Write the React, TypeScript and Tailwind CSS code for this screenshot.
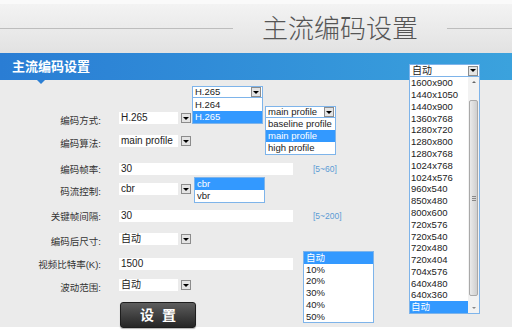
const font = "font-['Liberation_Sans','Noto_Sans_CJK_SC',sans-serif]";

function Arrow() {
    return (
        <span className="flex h-[10px] w-[10px] shrink-0 items-center justify-center border border-[#8c8c8c] bg-[#e4e4e4]">
            <span className="border-x-[3px] border-t-[3px] border-x-transparent border-t-black" />
        </span>
    );
}

function Select({ value }: { value: string }) {
    return (
        <div className="flex h-[12px] w-[72px] items-center">
            <div className="flex h-full w-[59px] items-center whitespace-nowrap bg-white pl-[2px] text-[10px] leading-none text-[#222]">
                {value}
            </div>
            <div className="ml-auto">
                <Arrow />
            </div>
        </div>
    );
}

function TextInput({ value }: { value: string }) {
    return (
        <div className="flex h-[12px] w-[174px] items-center bg-white pl-[2px] text-[10px] leading-none text-[#222]">
            {value}
        </div>
    );
}

interface PopupProps {
    value?: string;
    items: string[];
    selected: number;
    itemH: number;
    className: string;
}

function Popup({ value, items, selected, itemH, className }: PopupProps) {
    return (
        <div className={`absolute w-[71px] ${className}`}>
            {value && (
                <div className="flex h-[12px] items-center whitespace-nowrap border border-[#7eb4ea] bg-white pl-[2px] pr-[1px] text-[9.5px] leading-none text-[#222]">
                    <span className="flex-1 overflow-hidden">{value}</span>
                    <Arrow />
                </div>
            )}
            <div className="border border-t-0 border-[#7eb4ea] bg-white">
                {items.map((it, i) => (
                    <div
                        key={it}
                        style={{ height: itemH }}
                        className={`flex items-center overflow-hidden whitespace-nowrap px-[2px] text-[9.5px] leading-none ${
                            i === selected ? "bg-[#3399ff] text-white" : "text-[#222]"
                        }`}
                    >
                        {it}
                    </div>
                ))}
            </div>
        </div>
    );
}

const resolutions = [
    "1600x900",
    "1440x1050",
    "1440x900",
    "1360x768",
    "1280x720",
    "1280x800",
    "1280x768",
    "1024x768",
    "1024x576",
    "960x540",
    "850x480",
    "800x600",
    "720x576",
    "720x540",
    "720x480",
    "720x404",
    "704x576",
    "640x480",
    "640x360",
    "自动",
];

function Row({
    label,
    mt,
    drop,
    children,
}: {
    label: string;
    mt: string;
    drop?: boolean;
    children: React.ReactNode;
}) {
    return (
        <div className={`flex h-[12px] items-center ${mt}`}>
            <div
                className={`w-[101px] text-right text-[9.5px] leading-none text-[#333] ${
                    drop ? "translate-y-[3px]" : "translate-y-[1px]"
                }`}
            >
                {label}
            </div>
            <div className="ml-[18px] flex items-center">{children}</div>
        </div>
    );
}

export default function App() {
    return (
        <div className={`relative h-[331px] w-[512px] overflow-hidden bg-white ${font}`}>
            {/* page title */}
            <div className="flex h-[53px] items-center border-t-[4px] border-[#fafafa] bg-gradient-to-b from-[#f3f3f3] to-[#e2e2e2]">
                <div className="h-px w-[233px] bg-[#bdbdbd]" />
                <div className="ml-[29px] text-[26px] font-light leading-none text-[#555]">
                    主流编码设置
                </div>
                <div className="ml-[29px] h-px flex-1 bg-[#bdbdbd]" />
            </div>

            {/* section bar */}
            <div className="relative flex h-[27px] items-center bg-gradient-to-r from-[#2a7dd4] to-[#3ba2dd] pl-[12px]">
                <span className="text-[13px] font-bold leading-none text-white">主流编码设置</span>
                <span className="absolute left-[37px] top-[27px] border-x-[4px] border-t-[4px] border-x-transparent border-t-[#2b7fd4]" />
            </div>

            {/* form */}
            <div className="flex h-[247px] flex-col bg-[#ebebeb]">
                <Row label="编码方式:" mt="mt-[32px]" drop>
                    <Select value="H.265" />
                </Row>
                <Row label="编码算法:" mt="mt-[11px]" drop>
                    <Select value="main profile" />
                </Row>
                <Row label="编码帧率:" mt="mt-[16px]">
                    <TextInput value="30" />
                    <span className="ml-[20px] text-[8.5px] text-[#5b9bd5]">[5~60]</span>
                </Row>
                <Row label="码流控制:" mt="mt-[8px]" drop>
                    <Select value="cbr" />
                </Row>
                <Row label="关键帧间隔:" mt="mt-[15px]">
                    <TextInput value="30" />
                    <span className="ml-[20px] text-[8.5px] text-[#5b9bd5]">[5~200]</span>
                </Row>
                <Row label="编码后尺寸:" mt="mt-[11px]" drop>
                    <Select value="自动" />
                </Row>
                <Row label="视频比特率(K):" mt="mt-[13px]">
                    <TextInput value="1500" />
                </Row>
                <Row label="波动范围:" mt="mt-[9px]" drop>
                    <Select value="自动" />
                </Row>
                <div className="ml-[120px] mt-[11px]">
                    <button className="flex h-[26px] w-[76px] items-center justify-center rounded-[3px] border border-[#1e1e1e] bg-gradient-to-b from-[#5e5e5e] to-[#262626] text-[14px] font-bold tracking-[8px] text-white shadow-[0_1px_1px_rgba(0,0,0,0.3)]">
                        <span className="pl-[8px]">设置</span>
                    </button>
                </div>
            </div>

            {/* open dropdown lists */}
            <Popup
                className="left-[192px] top-[86px]"
                value="H.265"
                items={["H.264", "H.265"]}
                selected={1}
                itemH={12.5}
            />
            <Popup
                className="left-[265px] top-[106px]"
                value="main profile"
                items={["baseline profile", "main profile", "high profile"]}
                selected={1}
                itemH={12}
            />
            <Popup
                className="left-[194px] top-[177px] border-t border-[#7eb4ea]"
                items={["cbr", "vbr"]}
                selected={0}
                itemH={12}
            />
            <Popup
                className="left-[303px] top-[251px] border-t border-[#7eb4ea]"
                items={["自动", "10%", "20%", "30%", "40%", "50%"]}
                selected={0}
                itemH={11.7}
            />

            {/* resolution select with scrolling list */}
            <div className="absolute left-[409px] top-[64px] w-[71px]">
                <div className="flex h-[13px] items-center border border-[#7eb4ea] bg-white pl-[2px] pr-[1px] text-[10px] leading-none text-[#222]">
                    <span className="flex-1">自动</span>
                    <Arrow />
                </div>
                <div className="flex border border-t-0 border-[#7eb4ea] bg-white">
                    <div className="flex-1">
                        {resolutions.map((r, i) => (
                            <div
                                key={r}
                                className={`flex h-[11.8px] items-center px-[1px] text-[9.5px] leading-none ${
                                    i === resolutions.length - 1
                                        ? "bg-[#3399ff] text-white"
                                        : "text-[#222]"
                                }`}
                            >
                                {r}
                            </div>
                        ))}
                    </div>
                    <div className="flex w-[11px] flex-col items-center bg-[#f2f2f2]">
                        <span className="mt-[4px] border-x-[2px] border-b-[2px] border-x-transparent border-b-[#666]" />
                        <div className="mt-[17px] flex h-[196px] w-[9px] items-center justify-center rounded-[2px] border border-[#a9a9a9] bg-gradient-to-r from-[#eaeaea] to-[#cfcfcf]">
                            <div className="flex flex-col gap-[1px]">
                                <span className="h-px w-[4px] bg-[#888]" />
                                <span className="h-px w-[4px] bg-[#888]" />
                                <span className="h-px w-[4px] bg-[#888]" />
                            </div>
                        </div>
                        <span className="mb-[4px] mt-auto border-x-[2px] border-t-[2px] border-x-transparent border-t-[#888]" />
                    </div>
                </div>
            </div>
        </div>
    );
}
